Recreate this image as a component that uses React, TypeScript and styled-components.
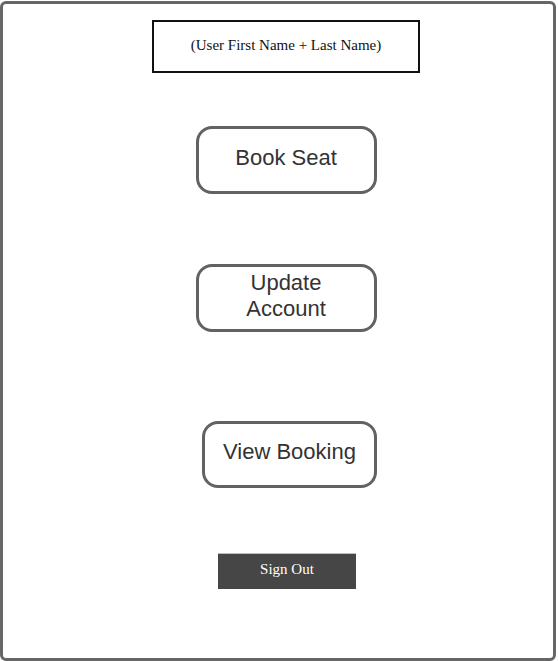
import React from "react";
import styled, { createGlobalStyle } from "styled-components";

const GlobalStyle = createGlobalStyle({
  body: {
    margin: 0,
    backgroundColor: "#ffffff",
    fontFamily: "'Liberation Sans', Arial, sans-serif",
  },
});

const StyledFrame = styled.div({
  boxSizing: "border-box",
  width: 556,
  height: 660,
  marginTop: 1,
  border: "3px solid #666666",
  borderRadius: 6,
  display: "flex",
  flexDirection: "column",
  alignItems: "center",
  paddingTop: 16,
  paddingLeft: 16,
});

const StyledNameBox = styled.div({
  boxSizing: "border-box",
  width: 268,
  height: 53,
  border: "2px solid #111111",
  display: "flex",
  alignItems: "center",
  justifyContent: "center",
  paddingBottom: 2,
  fontFamily: "'Liberation Serif', 'Times New Roman', serif",
  fontSize: 15,
  color: "#111111",
});

const StyledMenuButton = styled.button<{
  $top: number;
  $width: number;
  $height: number;
  $shift?: number;
}>(({ $top, $width, $height, $shift = 0 }) => ({
  boxSizing: "border-box",
  width: $width,
  height: $height,
  marginTop: $top,
  marginLeft: $shift,
  border: "3px solid #626262",
  borderRadius: 16,
  backgroundColor: "#ffffff",
  color: "#333333",
  fontFamily: "'Liberation Sans', Arial, sans-serif",
  fontSize: 22,
  lineHeight: "26px",
  padding: "0 0 5px 0",
  cursor: "pointer",
}));

const StyledSignOut = styled.button({
  boxSizing: "border-box",
  width: 138,
  height: 36,
  marginTop: 65,
  marginLeft: 2,
  border: "none",
  borderTop: "1px solid #bdbdbd",
  backgroundColor: "#464646",
  color: "#ffffff",
  fontFamily: "'Liberation Serif', 'Times New Roman', serif",
  fontSize: 15,
  padding: "0 0 4px 0",
  cursor: "pointer",
});

const App: React.FC = () => {
  return (
    <>
      <GlobalStyle />
      <StyledFrame>
        <StyledNameBox>(User First Name + Last Name)</StyledNameBox>
        <StyledMenuButton $top={53} $width={181} $height={68}>
          Book Seat
        </StyledMenuButton>
        <StyledMenuButton $top={70} $width={181} $height={68}>
          Update
          <br />
          Account
        </StyledMenuButton>
        <StyledMenuButton $top={89} $width={175} $height={67} $shift={7}>
          View Booking
        </StyledMenuButton>
        <StyledSignOut>Sign Out</StyledSignOut>
      </StyledFrame>
    </>
  );
};

export default App;
